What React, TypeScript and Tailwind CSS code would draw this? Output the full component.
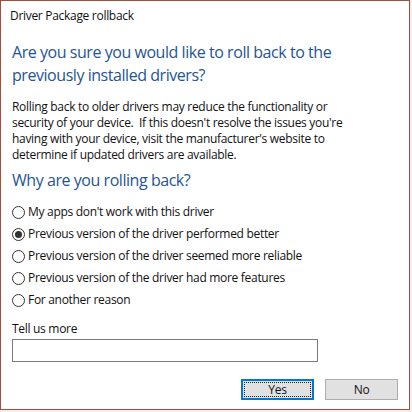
import React, { useState } from 'react';

const reasons = [
  "My apps don't work with this driver",
  'Previous version of the driver performed better',
  'Previous version of the driver seemed more reliable',
  'Previous version of the driver had more features',
  'For another reason',
];

const Radio: React.FC<{ checked: boolean }> = ({ checked }) => (
  <span className="flex h-[13px] w-[13px] shrink-0 items-center justify-center rounded-full border border-[#333333] bg-white">
    {checked && <span className="h-[7px] w-[7px] rounded-full bg-[#333333]" />}
  </span>
);

export default function App() {
  const [picked, setPicked] = useState(1);

  return (
    <div className="h-[412px] w-[412px] bg-[#f3eeec]">
      <div
        className="flex h-[410px] w-[410px] flex-col border border-[#9e4f3d] bg-white text-[12px] tracking-[-0.3px] text-[#111111]"
        style={{ fontFamily: '"Open Sans", "Noto Sans", sans-serif' }}
      >
        <div className="pl-[9px] pt-[7px] leading-[16px]">Driver Package rollback</div>

        <div className="flex flex-col px-[11px]">
          <h1 className="mt-[17px] text-[16px] font-normal leading-[23px] tracking-[-0.45px] text-[#1f5593]">
            Are you sure you would like to roll back to the
            <br />
            previously installed drivers?
          </h1>

          <p className="mt-[12px] leading-[16px]">
            Rolling back to older drivers may reduce the functionality or
            <br />
            security of your device.&nbsp; If this doesn't resolve the issues you're
            <br />
            having with your device, visit the manufacturer's website to
            <br />
            determine if updated drivers are available.
          </p>

          <h2 className="mt-[6px] text-[16px] font-normal leading-[23px] tracking-[-0.45px] text-[#1f5593]">
            Why are you rolling back?
          </h2>

          <div className="mt-[9px] flex flex-col">
            {reasons.map((r, i) => (
              <label
                key={r}
                className="flex h-[22px] cursor-default items-center gap-[3px]"
                onClick={() => setPicked(i)}
              >
                <Radio checked={picked === i} />
                <span>{r}</span>
              </label>
            ))}
          </div>

          <div className="mt-[10px] leading-[16px]">Tell us more</div>
          <input
            className="mt-[2px] h-[23px] w-[306px] border border-[#7a7a7a] px-1 outline-none"
            type="text"
          />

          <div className="mt-[17px] flex justify-end gap-[11px]">
            <button className="flex h-[21px] w-[73px] items-center justify-center border-2 border-[#0078d7] bg-[#e1e1e1] p-[1px]">
              <span className="flex h-full w-full items-center justify-center border border-dotted border-[#222222]">
                Yes
              </span>
            </button>
            <button className="flex h-[21px] w-[73px] items-center justify-center border border-[#adadad] bg-[#e1e1e1]">
              No
            </button>
          </div>
        </div>
      </div>
    </div>
  );
}
